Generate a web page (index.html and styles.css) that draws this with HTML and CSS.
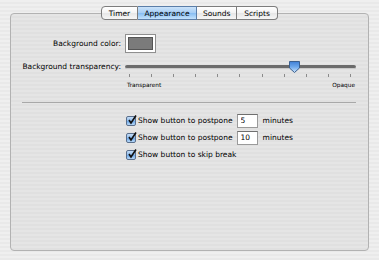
FILE: index.html
```html
<!DOCTYPE html>
<html lang="en">
<head>
    <meta charset="UTF-8">
    <title>Preferences - Appearance</title>
    <link rel="stylesheet" href="styles.css">
</head>
<body>
    <div class="window">
        <div class="tabs">
            <span class="tab">Timer</span>
            <span class="tab active">Appearance</span>
            <span class="tab">Sounds</span>
            <span class="tab">Scripts</span>
        </div>
        <div class="panel">
            <div class="form-row color-row">
                <label class="field-label">Background color:</label>
                <span class="color-well"><span class="swatch"></span></span>
            </div>
            <div class="form-row slider-row">
                <label class="field-label">Background transparency:</label>
                <div class="slider">
                    <div class="track">
                        <span class="knob" style="left: 73%">
                            <svg width="13" height="14" viewBox="0 0 13 14">
                                <defs>
                                    <linearGradient id="kg" x1="0" y1="0" x2="0" y2="1">
                                        <stop offset="0" stop-color="#3f7fd6"/>
                                        <stop offset="0.5" stop-color="#6ea8ec"/>
                                        <stop offset="1" stop-color="#cfe6fb"/>
                                    </linearGradient>
                                </defs>
                                <path d="M1.5 1.5 H11.5 V8 L6.5 12.5 L1.5 8 Z" fill="url(#kg)" stroke="#3a5f8f" stroke-width="1"/>
                            </svg>
                        </span>
                    </div>
                    <div class="ticks">
                        <span></span><span></span><span></span><span></span><span></span><span></span>
                        <span></span><span></span><span></span><span></span><span></span>
                    </div>
                    <div class="slider-labels">
                        <span>Transparent</span>
                        <span>Opaque</span>
                    </div>
                </div>
            </div>
            <hr class="separator">
            <div class="options">
                <div class="option">
                    <span class="checkbox"><svg width="10" height="10" viewBox="0 0 10 10"><path d="M2 5 L4 8 L9 0.5" fill="none" stroke="#111" stroke-width="1.6"/></svg></span>
                    <span>Show button to postpone</span>
                    <input class="minutes" type="text" value="5">
                    <span>minutes</span>
                </div>
                <div class="option">
                    <span class="checkbox"><svg width="10" height="10" viewBox="0 0 10 10"><path d="M2 5 L4 8 L9 0.5" fill="none" stroke="#111" stroke-width="1.6"/></svg></span>
                    <span>Show button to postpone</span>
                    <input class="minutes" type="text" value="10">
                    <span>minutes</span>
                </div>
                <div class="option">
                    <span class="checkbox"><svg width="10" height="10" viewBox="0 0 10 10"><path d="M2 5 L4 8 L9 0.5" fill="none" stroke="#111" stroke-width="1.6"/></svg></span>
                    <span>Show button to skip break</span>
                </div>
            </div>
        </div>
    </div>
</body>
</html>
```

FILE: styles.css
```css
body {
    margin: 0;
    font-family: "DejaVu Sans", sans-serif;
    font-size: 7.5px;
    color: #000;
    background-color: #ededed;
    background-image: repeating-linear-gradient(#efefef 0, #efefef 2px, #e9e9e9 2px, #e9e9e9 4px);
}

.window {
    width: 379px;
    height: 260px;
    box-sizing: border-box;
    padding: 6px 10px 9px 10px;
}

.tabs {
    display: flex;
    justify-content: center;
    position: relative;
    z-index: 1;
    margin-bottom: -7px;
}

.tab {
    height: 14px;
    line-height: 13px;
    box-sizing: border-box;
    padding: 0 6px;
    border: 1px solid #7d7d7d;
    border-left: none;
    background: linear-gradient(#ffffff, #f3f3f3 50%, #e6e6e6 51%, #f6f6f6);
    text-align: center;
}

.tab:first-child {
    border-left: 1px solid #7d7d7d;
    border-radius: 4px 0 0 4px;
    width: 37px;
}

.tab:last-child {
    border-radius: 0 4px 4px 0;
    width: 41px;
}

.tab:nth-child(2) {
    width: 59px;
}

.tab:nth-child(3) {
    width: 40px;
}

.tab.active {
    background: linear-gradient(#cbe3fa, #a5cdf5 50%, #86bdf2 51%, #c4e2fc);
    border-color: #5b7ea8;
}

.panel {
    height: 238px;
    box-sizing: border-box;
    padding: 20px 12px 0 11px;
    border: 1px solid #b2b2b2;
    border-radius: 4px;
    background-color: #e3e3e3;
    background-image: repeating-linear-gradient(#e5e5e5 0, #e5e5e5 2px, #e0e0e0 2px, #e0e0e0 4px);
}

.form-row {
    display: grid;
    grid-template-columns: 99px 1fr;
    column-gap: 4px;
}

.field-label {
    text-align: right;
    white-space: nowrap;
}

.color-row {
    align-items: center;
    height: 19px;
}

.color-well {
    display: block;
    width: 31px;
    height: 19px;
    box-sizing: border-box;
    padding: 2px;
    border: 1px solid #8f8f8f;
    background: #fff;
}

.swatch {
    display: block;
    height: 100%;
    border: 1px solid #555;
    box-sizing: border-box;
    background: #7b7b7b;
}

.slider-row {
    margin-top: 7px;
    align-items: start;
}

.slider-row .field-label {
    line-height: 14px;
}

.track {
    position: relative;
    height: 14px;
}

.track::before {
    content: "";
    display: block;
    position: absolute;
    left: 0;
    right: 0;
    top: 5px;
    height: 3px;
    border-radius: 2px;
    background: #6a6a6a;
    border-bottom: 1px solid #c8c8c8;
}

.knob {
    position: absolute;
    top: 0;
    margin-left: -6px;
    width: 13px;
    height: 14px;
}

.knob svg {
    display: block;
}

.ticks {
    display: flex;
    justify-content: space-between;
    padding: 0 5px 0 4px;
    height: 4px;
}

.ticks span {
    width: 1px;
    height: 3px;
    background: #8a8a8a;
}

.slider-labels {
    display: flex;
    justify-content: space-between;
    padding: 3px 1px 0 2px;
    font-size: 5.8px;
    line-height: 9px;
}

.separator {
    margin: 12px 0 0 0;
    border: none;
    border-top: 1px solid #a8a8a8;
    height: 0;
}

.options {
    padding: 9px 0 0 104px;
}

.option {
    display: flex;
    align-items: center;
    height: 17px;
}

.checkbox {
    width: 10px;
    height: 10px;
    box-sizing: border-box;
    margin-right: 2px;
    border: 1px solid #5a6f8c;
    border-radius: 2px;
    background: linear-gradient(#c5ddf7, #8ab9ec 50%, #6aa6e8 51%, #b7d8f8);
    position: relative;
}

.checkbox svg {
    position: absolute;
    left: 0;
    top: -2px;
}

.minutes {
    width: 21px;
    height: 14px;
    box-sizing: border-box;
    margin: 0 5px 0 4px;
    padding: 0 3px;
    border: 1px solid #9a9a9a;
    border-top-color: #6f6f6f;
    background: #fff;
    font-family: "DejaVu Sans", sans-serif;
    font-size: 7.5px;
    color: #000;
}
```
